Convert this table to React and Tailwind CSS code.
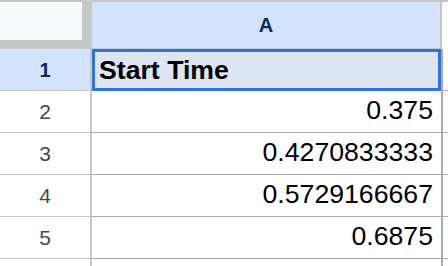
import React from 'react';

const filas = [
  { n: 2, valor: '0.375' },
  { n: 3, valor: '0.4270833333' },
  { n: 4, valor: '0.5729166667' },
  { n: 5, valor: '0.6875' },
];

export default function App() {
  return (
    <div className="w-[448px] h-[266px] overflow-hidden bg-white font-['Liberation_Sans',Arial,sans-serif] text-black">
      {/* Cabecera de columnas */}
      <div className="flex h-[49px] border-t-2 border-[#c4c7c5]">
        <div className="w-[92px] shrink-0 bg-[#c4c7c5]">
          <div className="w-[82px] h-[38px] bg-[#f8f9fa]"></div>
        </div>
        <div className="w-[348px] shrink-0 bg-[#d3e3fd] border-b border-[#c4c7c5] flex items-center justify-center">
          <span className="text-[20px] font-bold text-[#0b2b5c] leading-none">A</span>
        </div>
        <div className="w-[2px] shrink-0 bg-[#c4c7c5]"></div>
        <div className="flex-1 bg-white"></div>
      </div>

      {/* Fila 1 seleccionada */}
      <div className="flex h-[42px]">
        <div className="w-[92px] shrink-0 bg-[#d3e3fd] border-r-2 border-b border-[#c4c7c5] flex items-center justify-center">
          <span className="text-[20px] font-bold text-[#0b2b5c] leading-none">1</span>
        </div>
        <div className="relative w-[351px] shrink-0 bg-[#dde5f0] border-r-2 border-b border-[#ababab]">
          <div className="absolute left-0 top-0 w-[349px] h-[42px] border-[3px] border-[#2f73e0] pl-[4px] pt-[3px]">
            <span className="text-[26.67px] font-bold leading-[30px]">Start Time</span>
          </div>
        </div>
        <div className="flex-1 border-b border-[#ababab]"></div>
      </div>

      {filas.map(f => (
        <div key={f.n} className="flex h-[42px]">
          <div className="w-[92px] shrink-0 bg-white border-r-2 border-b border-[#c4c7c5] flex items-center justify-center">
            <span className="text-[21px] text-[#444746] leading-none">{f.n}</span>
          </div>
          <div className="w-[351px] shrink-0 border-r-2 border-b border-[#ababab] flex justify-end items-start pt-[4px] pr-[8px]">
            <span className="text-[26.67px] leading-[30px]">{f.valor}</span>
          </div>
          <div className="flex-1 border-b border-[#ababab]"></div>
        </div>
      ))}

      {/* Fila 6 cortada */}
      <div className="flex h-[42px]">
        <div className="w-[92px] shrink-0 bg-white border-r-2 border-[#c4c7c5]"></div>
        <div className="w-[351px] shrink-0 border-r-2 border-[#ababab]"></div>
        <div className="flex-1"></div>
      </div>
    </div>
  );
}
